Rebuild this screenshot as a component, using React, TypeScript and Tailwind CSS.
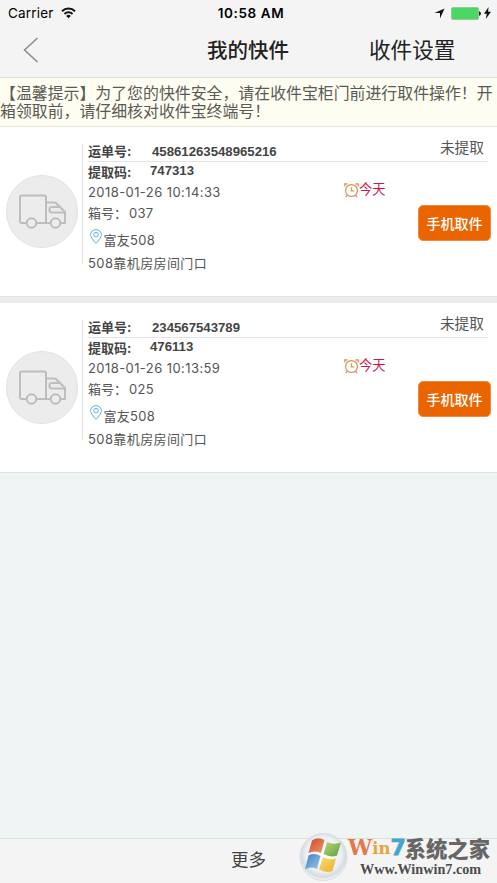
interface Parcel {
  waybill: string;
  code: string;
  time: string;
  box: string;
}

const parcels: Parcel[] = [
  { waybill: "45861263548965216", code: "747313", time: "2018-01-26 10:14:33", box: "037" },
  { waybill: "234567543789", code: "476113", time: "2018-01-26 10:13:59", box: "025" },
];

function WifiIcon() {
  return (
    <svg width="15" height="12" viewBox="0 0 15 12" fill="none" stroke="#111" strokeWidth="2">
      <path d="M1 4.3a9.2 9.2 0 0 1 13 0" />
      <path d="M3.5 7a5.7 5.7 0 0 1 8 0" />
      <path d="M7.5 11.2 5.2 8.9a3.3 3.3 0 0 1 4.6 0z" fill="#111" stroke="none" />
    </svg>
  );
}

function StatusBar() {
  return (
    <div className="grid h-[26px] grid-cols-3 items-center pl-2 pr-[6px] text-black">
      <div className="flex items-center gap-[7px]">
        <span className="text-[13.5px] tracking-[0.2px]">Carrier</span>
        <WifiIcon />
      </div>
      <span className="pl-[3px] pt-px text-center text-[13.5px] font-semibold tracking-[0.6px] whitespace-nowrap">
        10:58 AM
      </span>
      <div className="flex items-center justify-end">
        <svg width="11" height="11" viewBox="0 0 11 11" className="mr-[6px]">
          <path d="M10.5.5 6 10.5V5H.5z" fill="#111" />
        </svg>
        <div className="h-[13px] w-[28px] rounded-[2px] border border-[#93c99b] bg-[#4cd662]" />
        <svg width="2" height="5" viewBox="0 0 2 5" className="mr-[3px]">
          <path d="M0 0q2 1 2 2.5T0 5z" fill="#222" />
        </svg>
        <svg width="7" height="12" viewBox="0 0 7 12">
          <path d="M4.6 0 0 6.8h2.8L1.8 12 7 4.8H4.1z" fill="#111" />
        </svg>
      </div>
    </div>
  );
}

function TruckIcon() {
  return (
    <svg width="48" height="36" viewBox="0 0 48 36" fill="none" stroke="#bdbdbd" strokeWidth="2">
      <path d="M8 29H4q-2 0-2-2V3.500q0-2 2-2h22q2 0 2 2V29H19" />
      <path d="M28 8.500h9.500L47 18v11h-5M28 29h4" />
      <path d="M41 13h-7.500q-2 0-2 2v1.500q0 2 2 2H47" />
      <circle cx="13.500" cy="29" r="4.800" />
      <circle cx="37.500" cy="29" r="4.800" />
    </svg>
  );
}

function PinIcon() {
  return (
    <svg width="12" height="16" viewBox="0 0 12 16" fill="none" stroke="#5bb3d6" className="mt-1">
      <path d="M6 14.500C3.500 11.300.6 8.600.6 5.700a5.400 5.100 0 0 1 10.800 0C11.400 8.600 8.500 11.300 6 14.500z" />
      <circle cx="6" cy="5.700" r="2.300" />
    </svg>
  );
}

function AlarmIcon() {
  return (
    <svg width="15" height="15" viewBox="0 0 15 15" fill="none" stroke="#dc9658" strokeWidth="1.300">
      <circle cx="7.500" cy="7.500" r="5.900" />
      <path d="M7.500 4.200v3.600h2.700M.8 3.500V1h2.700M14.200 3.500V1h-2.700M3.300 12.200 1.800 14M11.700 12.200l1.500 1.800" />
    </svg>
  );
}

function ParcelCard({ parcel }: { parcel: Parcel }) {
  return (
    <div className="flex h-[169px] bg-white text-[13px] text-[#555]">
      <div className="mt-[48px] ml-[6px] flex h-[73px] w-[72px] shrink-0 items-center justify-center rounded-full border border-[#e2e2e2] bg-[#ececec]">
        <TruckIcon />
      </div>
      <div className="mt-[17px] ml-1 h-[120px] w-px shrink-0 bg-[#dedede]" />
      <div className="ml-[5px] flex-1 pr-[9px]">
        {/* Waybill and status */}
        <div className="flex h-[35px] border-b border-[#e4e4e4] font-bold text-[#444]">
          <span className="mt-[14px] w-16 leading-5">运单号:</span>
          <span className="mt-[15px] font-[Liberation_Sans] text-[13.2px] leading-5">{parcel.waybill}</span>
          <span className="mt-[11px] mr-1 ml-auto text-[14.7px] leading-5 font-normal text-[#555]">未提取</span>
        </div>
        <div className="flex">
          <div className="flex-1 whitespace-nowrap">
            <div className="flex h-5 font-bold text-[#444]">
              <span className="w-[62px] leading-[21px]">提取码:</span>
              <span className="font-[Liberation_Sans] text-[13.2px] leading-[17px]">{parcel.code}</span>
            </div>
            <div className="h-5 leading-5 tracking-[0.42px]">{parcel.time}</div>
            <div className="h-[23px] leading-[23px]">
              箱号：<span className="ml-[2px] tracking-[0.3px]">{parcel.box}</span>
            </div>
            <div className="flex h-[25px] pl-[2px]">
              <PinIcon />
              <span className="ml-[1.5px] leading-[31px] tracking-[0.3px]">富友508</span>
            </div>
            <div className="h-[26px] leading-[26px] tracking-[0.4px]">508靠机房房间门口</div>
          </div>
          <div className="mt-[18px] flex h-5 w-[74px] items-center text-[13.3px] text-[#c9193f]">
            <AlarmIcon />
            <span>今天</span>
          </div>
          <button className="mt-[43px] -mr-[3px] h-9 w-[73px] shrink-0 rounded-[5px] border border-[#f08b3c] bg-[#ea6500] text-[14px] font-medium whitespace-nowrap text-white">
            手机取件
          </button>
        </div>
      </div>
    </div>
  );
}

function Watermark() {
  return (
    <div className="absolute top-[832px] left-[299px] flex">
      <svg width="49" height="50" viewBox="0 0 49 50">
        <defs>
          <radialGradient id="orb" cx="50%" cy="45%" r="52%">
            <stop offset="0" stopColor="#fff" />
            <stop offset=".7" stopColor="#eef1f4" />
            <stop offset=".92" stopColor="#d6dbe1" />
            <stop offset="1" stopColor="#eef0f2" />
          </radialGradient>
          <linearGradient id="red" x2="1" y2="1"><stop stopColor="#c9492d" /><stop offset="1" stopColor="#ef9860" /></linearGradient>
          <linearGradient id="green" x2="1" y2="1"><stop stopColor="#bad77b" /><stop offset="1" stopColor="#5fa03c" /></linearGradient>
          <linearGradient id="blue" x2="1" y2="1"><stop stopColor="#3d7fc0" /><stop offset="1" stopColor="#9cc9ea" /></linearGradient>
          <linearGradient id="yellow" x2="1" y2="1"><stop stopColor="#f8df72" /><stop offset="1" stopColor="#efad2d" /></linearGradient>
        </defs>
        <circle cx="24.500" cy="25" r="23.500" fill="url(#orb)" stroke="#d9dde2" />
        <path d="M13 8.500q6-4 12.500-.5l-3.500 13q-6-3-12.500 0z" fill="url(#red)" />
        <path d="M28 10q7 3 14 .5l-4 13q-6 2.500-13.500-1.500z" fill="url(#green)" />
        <path d="M9.500 23.500q6-3 12 .5L18 37q-6-3-12 .5z" fill="url(#blue)" />
        <path d="M24 25q6 3.500 13 1.500L33.500 39q-6 2.500-13.500-1.500z" fill="url(#yellow)" />
      </svg>
      <div className="mt-[3px] whitespace-nowrap">
        <div className="flex h-[26px] items-center font-['DejaVu_Serif'] leading-[26px] font-bold">
          <span className="text-[21.500px] text-[#e4774c]">W</span>
          <span className="text-[16.500px] leading-[29px] text-[#e8a33d]">in</span>
          <span className="-mr-px font-['DejaVu_Sans'] text-[22px] text-[#45a5cf] [-webkit-text-stroke:0.800px_#45a5cf]">7</span>
          <span className="font-['Noto_Sans_CJK_SC'] text-[21.300px] font-black text-[#666]">系统之家</span>
        </div>
        <div className="pl-[12px] font-[Liberation_Serif] text-[14.200px] leading-[17px] font-bold text-[#4c4c4c]">
          Www.Winwin7.com
        </div>
      </div>
    </div>
  );
}

export default function App() {
  return (
    <div className="relative flex h-[883px] w-[497px] flex-col overflow-hidden bg-[#eff4f4] font-[Inter,'Noto_Sans_CJK_SC',sans-serif]">
      <header className="h-[78px] border-b border-[#ddded2] bg-[#f4f4f4]">
        <StatusBar />
        <div className="flex h-[48px] items-center text-[#222]">
          <svg width="16" height="26" viewBox="0 0 16 26" fill="none" stroke="#8a8a8a" strokeWidth="1.500" className="ml-[23px]">
            <path d="M14.500 1 1.500 13l13 12" />
          </svg>
          <h1 className="ml-[168px] pt-[3px] text-[20.500px] font-medium whitespace-nowrap">我的快件</h1>
          <span className="ml-[80px] text-[21.600px] whitespace-nowrap">收件设置</span>
        </div>
      </header>

      <p className="h-[49px] border-b border-[#e6e6df] bg-[#fdfdf1] pt-[7px] font-['Liberation_Sans','Noto_Sans_CJK_SC',sans-serif] text-[15.900px] leading-[18.400px] text-[#5a5a55]">
        【温馨提示】为了您的快件安全，请在收件宝柜门前进行取件操作！开
        <br />
        箱领取前，请仔细核对收件宝终端号！
      </p>

      <main className="flex flex-1 flex-col">
        {parcels.map((parcel, i) => (
          <div key={parcel.waybill}>
            {i > 0 && <div className="h-[7px] border-t border-[#e4e4e4] bg-[#ececec]" />}
            <ParcelCard parcel={parcel} />
          </div>
        ))}
        <div className="h-px bg-[#dfe3e3]" />
      </main>

      <footer className="h-[45px] border-t border-[#dcdfdf] bg-[#f4f4f4] text-center text-[17.500px] leading-[42px] text-[#444]">
        更多
      </footer>
      <Watermark />
    </div>
  );
}
